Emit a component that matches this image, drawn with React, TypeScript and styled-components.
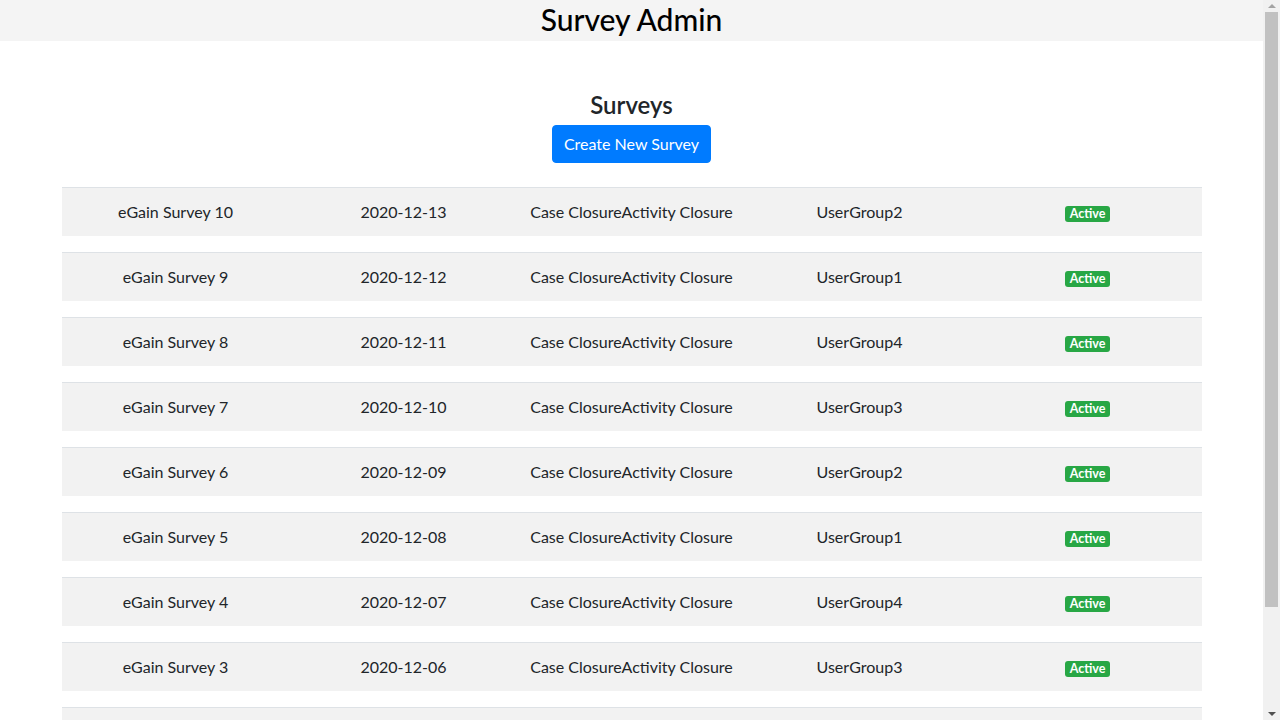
import React from "react";
import styled, { createGlobalStyle } from "styled-components";

const GlobalStyle = createGlobalStyle`
  html, body { margin: 0; padding: 0; background: #fff; }
  body {
    font-family: Lato, "Noto Sans", sans-serif;
    font-size: 16px;
    line-height: 1.5;
    color: #212529;
  }
  * { box-sizing: border-box; }
`;

const Page = styled.div`
  margin-right: 17px;
`;

const Header = styled.header`
  height: 41px;
  background: #f4f4f4;
  display: flex;
  align-items: center;
  justify-content: center;
`;

const Title = styled.h1`
  margin: 0;
  font-size: 30px;
  font-weight: 500;
  color: #000;
  line-height: 1;
  transform: translateY(-2px);
`;

const Container = styled.main`
  width: 1140px;
  margin: 0 auto;
  display: flex;
  flex-direction: column;
  align-items: center;
  padding-top: 50px;
`;

const Heading = styled.h2`
  margin: 0 0 5px;
  font-size: 24px;
  font-weight: 600;
  line-height: 1.2;
`;

const Button = styled.button`
  font-family: inherit;
  font-size: 16px;
  line-height: 24px;
  padding: 6px 11px;
  color: #fff;
  background: #007bff;
  border: 1px solid #007bff;
  border-radius: 4px;
  margin-bottom: 24px;
  cursor: pointer;
`;

const List = styled.div`
  width: 100%;
  display: flex;
  flex-direction: column;
  gap: 16px;
  padding-bottom: 16px;
`;

const Row = styled.div`
  display: grid;
  grid-template-columns: repeat(5, 1fr);
  border-top: 1px solid #dee2e6;
  background: #f2f2f2;
`;

const Cell = styled.div`
  padding: 12px;
  text-align: center;
  line-height: 24px;
`;

const Badge = styled.span`
  display: inline-block;
  font-size: 12.5px;
  font-weight: 700;
  line-height: 1;
  padding: 2px 5px 2px;
  color: #fff;
  background: #28a745;
  border-radius: 3px;
  vertical-align: middle;
`;

const ScrollTrack = styled.div`
  position: fixed;
  top: 0;
  right: 0;
  width: 17px;
  height: 100vh;
  background: #f1f1f1;
  display: flex;
  flex-direction: column;
  align-items: center;
`;

const Arrow = styled.div`
  height: 12px;
  width: 100%;
  display: flex;
  align-items: center;
  justify-content: center;
`;

const Thumb = styled.div`
  width: 13px;
  height: 595px;
  background: #c1c1c1;
`;

const Spacer = styled.div`
  flex: 1;
`;

const groups = ["UserGroup2", "UserGroup1", "UserGroup4", "UserGroup3"];

const surveys = Array.from({ length: 10 }, (_, i) => {
  const n = 10 - i;
  const day = 13 - i;
  return {
    name: `eGain Survey ${n}`,
    date: `2020-12-${String(day).padStart(2, "0")}`,
    type: "Case ClosureActivity Closure",
    group: groups[i % 4],
  };
});

function FakeScrollbar() {
  return (
    <ScrollTrack aria-hidden>
      <Arrow>
        <svg width="8" height="4" viewBox="0 0 8 4">
          <path d="M0 4 L4 0 L8 4 Z" fill="#a3a3a3" />
        </svg>
      </Arrow>
      <Thumb />
      <Spacer />
      <Arrow>
        <svg width="8" height="4" viewBox="0 0 8 4">
          <path d="M0 0 L4 4 L8 0 Z" fill="#505050" />
        </svg>
      </Arrow>
    </ScrollTrack>
  );
}

export default function App() {
  return (
    <>
      <GlobalStyle />
      <Page>
        <Header>
          <Title>Survey Admin</Title>
        </Header>
        <Container>
          <Heading>Surveys</Heading>
          <Button>Create New Survey</Button>
          <List>
            {surveys.map((s) => (
              <Row key={s.name}>
                <Cell>{s.name}</Cell>
                <Cell>{s.date}</Cell>
                <Cell>{s.type}</Cell>
                <Cell>{s.group}</Cell>
                <Cell>
                  <Badge>Active</Badge>
                </Cell>
              </Row>
            ))}
          </List>
        </Container>
      </Page>
      <FakeScrollbar />
    </>
  );
}
